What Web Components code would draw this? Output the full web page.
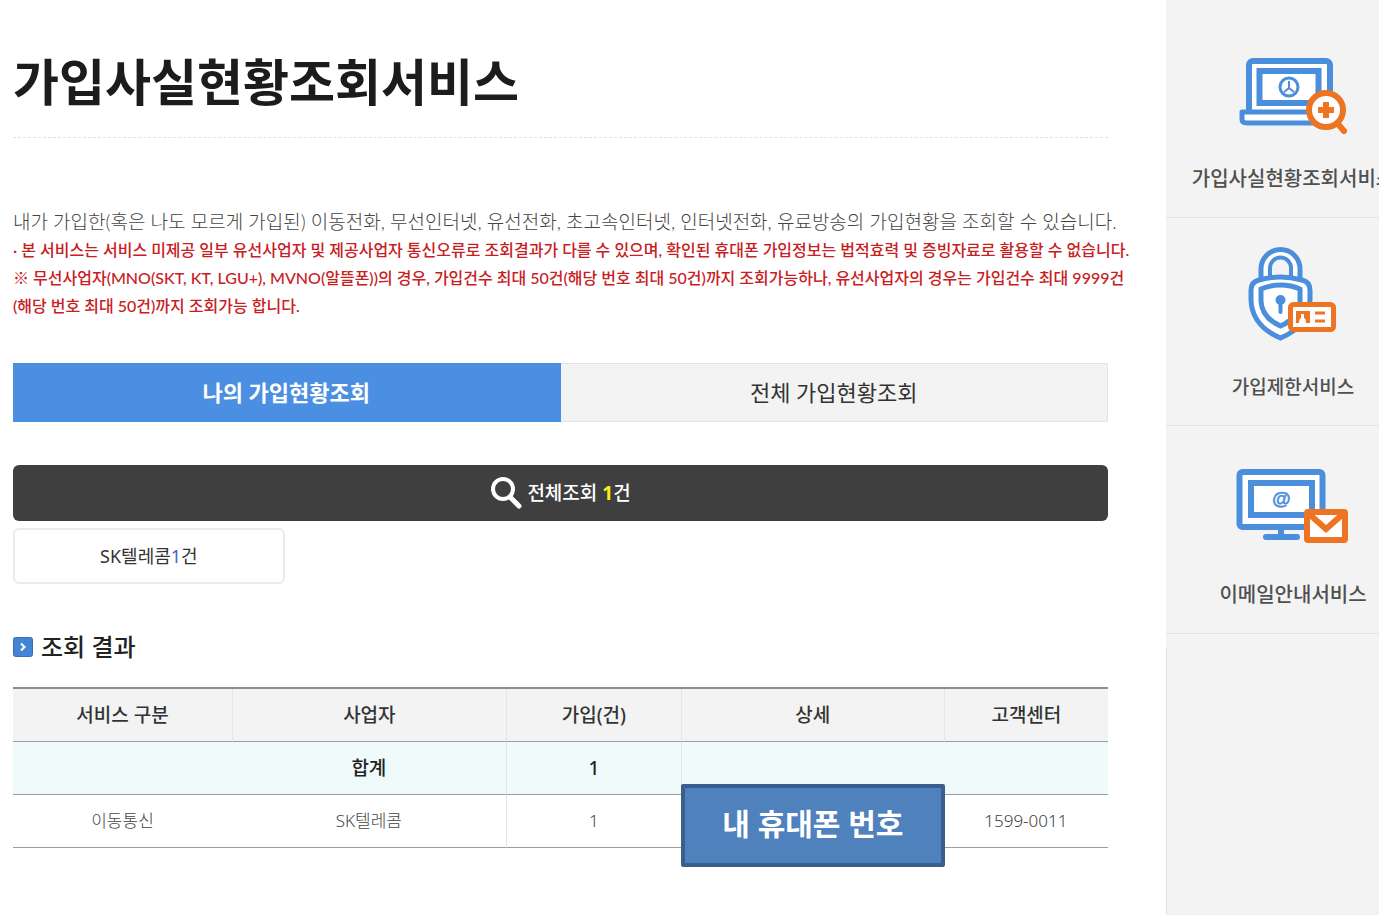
<!DOCTYPE html>
<html lang="ko">
<head>
<meta charset="utf-8">
<meta name="viewport" content="width=device-width, initial-scale=1">
<title>가입사실현황조회서비스</title>
<style>
  body {
    margin: 0;
    background: #fff;
    color: #222;
    font-family: "Noto Sans", "Noto Sans CJK KR", sans-serif;
    --blue: #4b8fe2;
    --panel: #f3f3f3;
    --line: #e4e4e4;
  }
</style>
</head>
<body>
<service-page>
  <page-title>가입사실현황조회서비스</page-title>
  <service-notice>
    내가 가입한(혹은 나도 모르게 가입된) 이동전화, 무선인터넷, 유선전화, 초고속인터넷, 인터넷전화, 유료방송의 가입현황을 조회할 수 있습니다.
    <span slot="warning">· 본 서비스는 서비스 미제공 일부 유선사업자 및 제공사업자 통신오류로 조회결과가 다를 수 있으며, 확인된 휴대폰 가입정보는 법적효력 및 증빙자료로 활용할 수 없습니다.</span>
    <span slot="limit">※ 무선사업자(MNO(SKT, KT, LGU+), MVNO(알뜰폰))의 경우, 가입건수 최대 50건(해당 번호 최대 50건)까지 조회가능하나, 유선사업자의 경우는 가입건수 최대 9999건<br>(해당 번호 최대 50건)까지 조회가능 합니다.</span>
  </service-notice>
  <lookup-tabs></lookup-tabs>
  <lookup-summary></lookup-summary>
  <section-heading>조회 결과</section-heading>
  <result-table></result-table>
  <service-nav slot="aside">
    <service-link icon="laptop">가입사실현황조회서비스</service-link>
    <service-link icon="lock">가입제한서비스</service-link>
    <service-link icon="mail">이메일안내서비스</service-link>
  </service-nav>
</service-page>

<script>
const define = (name, html, setup) => {
  const template = document.createElement('template');
  template.innerHTML = html;
  customElements.define(name, class extends HTMLElement {
    constructor() {
      super();
      this.attachShadow({ mode: 'open' }).append(template.content.cloneNode(true));
    }
    connectedCallback() {
      if (setup) setup(this, this.shadowRoot);
    }
  });
};

define('service-page', `
  <style>
    :host { display: grid; grid-template-columns: minmax(0, 1fr) 213px; min-height: 100vh; }
    main { padding: 44px 58px 40px 13px; }
  </style>
  <main><slot></slot></main>
  <slot name="aside"></slot>`);

define('page-title', `
  <style>
    :host { display: block; padding-bottom: 17px; border-bottom: 1px dashed #e2e2e2; }
    h1 { margin: 0; font-size: 50px; line-height: 76px; font-weight: 700; color: #1c1c1c; white-space: nowrap; }
  </style>
  <h1><slot></slot></h1>`);

define('service-notice', `
  <style>
    :host { display: block; margin-top: 70px; line-height: 28px; font-family: Lato, "Noto Sans CJK KR", sans-serif; }
    p { margin: 0; white-space: nowrap; }
    .lead { font-size: 19px; font-weight: 300; color: #444; }
    .red { font-size: 16px; font-weight: 500; color: #c8201f; }
  </style>
  <p class="lead"><slot></slot></p>
  <p class="red"><slot name="warning"></slot></p>
  <p class="red"><slot name="limit"></slot></p>`);

define('lookup-tabs', `
  <style>
    :host { display: block; margin-top: 43px; }
    div { display: grid; grid-template-columns: 1fr 1fr; }
    button { height: 59px; padding: 0 0 2px; border: 1px solid var(--line); border-left: 0; background: var(--panel);
      font: inherit; font-size: 22px; line-height: 32px; color: #333; }
    button[aria-selected="true"] { border-color: var(--blue); background: var(--blue); color: #fff; font-weight: 700; }
  </style>
  <div role="tablist">
    <button type="button" role="tab" aria-selected="true">나의 가입현황조회</button>
    <button type="button" role="tab" aria-selected="false">전체 가입현황조회</button>
  </div>`, (host, root) => {
    const tabs = root.querySelectorAll('button');
    tabs.forEach(tab => tab.addEventListener('click', () =>
      tabs.forEach(t => t.setAttribute('aria-selected', String(t === tab)))));
  });

define('lookup-summary', `
  <style>
    :host { display: flex; flex-direction: column; gap: 7px; margin-top: 43px; }
    button { display: flex; align-items: center; justify-content: center; height: 56px; padding: 0;
      border: 0; border-radius: 6px; font: inherit; font-size: 18px; line-height: 28px; }
    .all { gap: 5px; background: #3f3f3f; color: #fff; font-weight: 500; font-size: 19px; }
    .all b { font-weight: 700; color: #f5ee1a; }
    .carrier { width: calc(25% - 2px); box-sizing: border-box; background: #fff; border: 2px solid #ebebeb; color: #333; }
    .carrier b { font-weight: 400; color: #4a5fd0; }
  </style>
  <button type="button" class="all">
    <svg width="32" height="34" viewBox="0 0 32 34" fill="none" stroke="#fff" aria-hidden="true">
      <circle cx="13" cy="13" r="10" stroke-width="4"/>
      <path d="M20 21l9 9" stroke-width="5" stroke-linecap="round"/>
    </svg>
    <span>전체조회 <b>1</b>건</span>
  </button>
  <button type="button" class="carrier"><span>SK텔레콤<b>1</b>건</span></button>`);

define('section-heading', `
  <style>
    :host { display: flex; align-items: center; gap: 8px; margin-top: 44px; }
    h2 { margin: 0; font-size: 24px; line-height: 38px; font-weight: 500; color: #222; }
  </style>
  <svg width="20" height="20" viewBox="0 0 20 20" aria-hidden="true">
    <rect x="0.5" y="0.5" width="19" height="19" rx="2" fill="#4284d6" stroke="#3470b9"/>
    <path d="M8 6.5l3.5 3.5L8 13.5" fill="none" stroke="#fff" stroke-width="2"/>
  </svg>
  <h2><slot></slot></h2>`);

define('redaction-box', `
  <style>
    :host { display: flex; align-items: center; justify-content: center; box-sizing: border-box;
      padding-bottom: 4px; border: 4px solid #3a5f8f; border-radius: 2px; background: #4f81bd;
      color: #fff; font-size: 30px; line-height: 40px; font-weight: 700; white-space: nowrap; }
  </style>
  <slot></slot>`);

define('result-table', `
  <style>
    :host { display: block; margin-top: 21px; }
    table { width: 100%; table-layout: fixed; border-collapse: separate; border-spacing: 0; border-top: 2px solid #8e8e8e; }
    th, td { height: 52px; padding: 0; border-bottom: 1px solid #9d9d9d; text-align: center; line-height: 28px; }
    thead th { background: var(--panel); font-size: 19px; font-weight: 500; color: #333; }
    thead th + th, .edge { border-left: 1px solid var(--line); }
    .total > * { background: #effafa; font-size: 19px; font-weight: 500; color: #222; }
    .row td { font-size: 17px; font-weight: 300; color: #444; }
    .detail { position: relative; }
    redaction-box { position: absolute; top: -11px; left: 0; right: -1px; height: 83px; }
  </style>
  <table>
    <colgroup>
      <col style="width:20%"><col style="width:25%"><col style="width:16%"><col style="width:24%"><col style="width:15%">
    </colgroup>
    <thead>
      <tr><th scope="col">서비스 구분</th><th scope="col">사업자</th><th scope="col">가입(건)</th><th scope="col">상세</th><th scope="col">고객센터</th></tr>
    </thead>
    <tbody>
      <tr class="total"><td></td><th scope="row">합계</th><td class="edge">1</td><td class="edge"></td><td></td></tr>
      <tr class="row"><td>이동통신</td><td>SK텔레콤</td><td class="edge">1</td><td class="detail"><redaction-box>내 휴대폰 번호</redaction-box></td><td>1599-0011</td></tr>
    </tbody>
  </table>`);

define('service-nav', `
  <style>
    :host { display: flex; flex-direction: column; overflow: hidden; background: var(--panel); }
    nav { width: 254px; padding-top: 10px; }
    .rest { flex: 1; margin-top: 14px; border-left: 1px solid #dedede; }
  </style>
  <nav><slot></slot></nav>
  <div class="rest"></div>`);

const icons = {
  laptop: `
    <g fill="#fff" stroke="#4b8fdc">
      <path d="M16 81V35a4 4 0 0 1 4-4H93a4 4 0 0 1 4 4V81" stroke-width="6"/>
      <path d="M9 82H99V93H14Q9 93 9 89Z" stroke-width="5" stroke-linejoin="round"/>
      <rect x="26.500" y="41" width="59" height="32" stroke-width="6"/>
      <circle cx="56" cy="57" r="9" stroke-width="3"/>
      <path d="M56 51v7l-5 4M56 58l5 4" stroke-width="2" fill="none"/>
    </g>
    <path d="M105 94l6 7" stroke="#ec7423" stroke-width="6" stroke-linecap="round"/>
    <circle cx="93" cy="80" r="17" fill="#fff" stroke="#ec7423" stroke-width="6"/>
    <path d="M93 72v16M85 80h16" stroke="#ec7423" stroke-width="6"/>`,
  lock: `
    <g stroke="#4b8fdc" stroke-width="5" fill="none">
      <path d="M28 42V31a19.500 19.500 0 0 1 39 0V42" fill="#fff"/>
      <path d="M37 41V30a10.500 10.500 0 0 1 21 0V41" fill="#f3f3f3" stroke-width="4"/>
      <path d="M47.500 39Q58 39 69 42Q77 44 77 52V62Q76 88 47.500 100Q19 88 18 62V52Q18 44 26 42Q37 39 47.500 39Z" fill="#fff"/>
      <path d="M47.500 47Q58 47 67 51V63Q66 80 47.500 88Q29 80 28 63V51Q37 47 47.500 47Z"/>
      <path d="M47.500 62V74" stroke-width="4" stroke-linecap="round"/>
    </g>
    <circle cx="47.500" cy="62" r="5" fill="#4b8fdc"/>
    <rect x="57.500" y="66.500" width="43" height="25" rx="3" fill="#fff" stroke="#ec7423" stroke-width="5"/>
    <path d="M63 73H77V85H73Q73 81 71 80V76H68V80Q66 81 66 85H63Z" fill="#ec7423"/>
    <path d="M82 75h10M82 83h10" stroke="#ec7423" stroke-width="3"/>`,
  mail: `
    <g fill="#fff" stroke="#4b8fdc">
      <rect x="6.500" y="26" width="83" height="55" rx="3" stroke-width="6"/>
      <rect x="18" y="37" width="61" height="32" stroke-width="6"/>
      <path d="M48 82v8" stroke-width="6"/>
      <path d="M33 91H64" stroke-width="6" stroke-linecap="round"/>
    </g>
    <text x="48" y="59" text-anchor="middle" font-family="Liberation Sans, sans-serif" font-size="19" font-weight="700" font-style="italic" fill="#4b8fdc" stroke="#4b8fdc" stroke-width="0.5">@</text>
    <rect x="74" y="66" width="38" height="28" rx="1" fill="#fff" stroke="#ec7423" stroke-width="6"/>
    <path d="M76 68L93 83L110 68" fill="none" stroke="#ec7423" stroke-width="6"/>`
};

define('service-link', `
  <style>
    :host { display: block; border-bottom: 1px solid var(--line); }
    a { display: flex; flex-direction: column; align-items: center; gap: 25px; padding: 20px 0 24px; color: #505050; text-decoration: none; }
    span { font-size: 20px; line-height: 28px; font-weight: 500; white-space: nowrap; }
    :host([icon="lock"]) span { font-size: 19px; }
  </style>
  <a href="#"><svg width="120" height="110" viewBox="0 0 120 110" aria-hidden="true"></svg><span><slot></slot></span></a>`,
  (host, root) => { root.querySelector('svg').innerHTML = icons[host.getAttribute('icon')]; });
</script>
</body>
</html>
